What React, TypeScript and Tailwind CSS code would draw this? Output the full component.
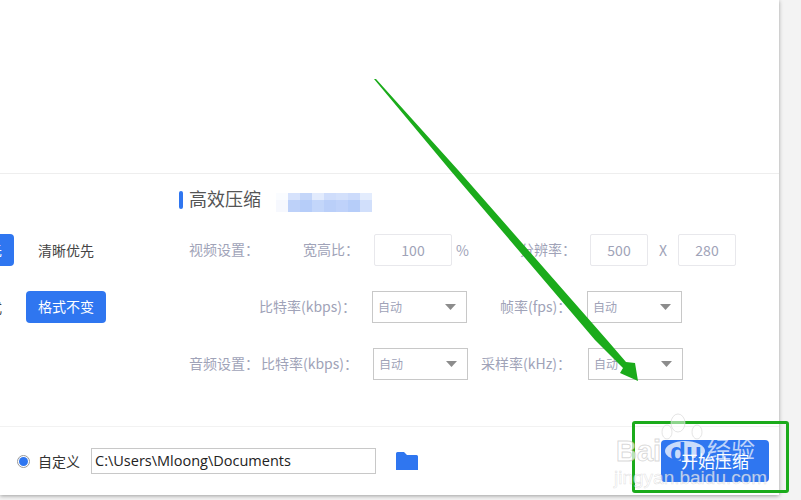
const cjk = "font-['Noto_Sans_CJK_SC','Noto_Sans',sans-serif]";
const colon = "\uFF1A";

function Label({ className, text }: { className: string; text: string }) {
  return <span className={`${className} shrink-0 text-[14px] leading-[31px] text-[#a0a3b8] whitespace-nowrap`}>{text + colon}</span>;
}

function NumberBox({ width, value }: { width: string; value: string }) {
  return (
    <div className={`${width} h-[32px] shrink-0 border border-[#e8e8ec] rounded-[2px] flex items-center justify-center text-[14px] text-[#a0a3b8]`}>
      {value}
    </div>
  );
}

function Select() {
  return (
    <div className="w-[95px] h-[32px] shrink-0 border border-[#c8c8c8] flex items-center justify-between pl-[5px] pr-[10px] text-[12px] text-[#a0a3b8]">
      <span>自动</span>
      <svg width="11" height="6" viewBox="0 0 11 6"><path d="M0 0H11L5.5 6Z" fill="#8c8c8c" /></svg>
    </div>
  );
}

function BlueButton({ text, margin }: { text: string; margin?: string }) {
  return (
    <div className={`${margin ?? ""} w-[80px] h-[32px] shrink-0 rounded-[4px] bg-[#2f76f0] text-white text-[14px] leading-[31px] text-center whitespace-nowrap`}>
      {text}
    </div>
  );
}

const blur = [
  "#fafcff", "#d6e2fc", "#c4d6f9", "#e2ebfd", "#cfddfb", "#d3e0fb", "#ccdbfb", "#e3ecfd",
  "#f6f8fe", "#bdd1f9", "#b6cdf9", "#c3d6fa", "#bacff9", "#bfd2fa", "#b6cdf9", "#d1dffb",
];

export default function App() {
  return (
    <div className={`relative w-[801px] h-[500px] overflow-hidden bg-[#f3f3f3] ${cjk}`}>
      {/* WINDOW */}
      <div className="w-[779px] h-[495px] bg-white flex flex-col shadow-[0_1px_4px_rgba(0,0,0,0.35)]">
        <div className="h-[174px] shrink-0 border-b border-[#eeeeee]" />

        {/* SETTINGS */}
        <div className="flex-1 flex flex-col overflow-hidden">
          <div className="mt-[17px] ml-[179px] h-[18px] flex items-center">
            <div className="w-[4px] h-[18px] rounded-[2px] bg-[#2f76f0]" />
            <span className="ml-[6px] text-[18px] leading-[15px] h-[18px] text-[#555555] whitespace-nowrap">高效压缩</span>
            <div className="ml-[15px] mt-[4px] w-[96px] h-[19px] grid grid-cols-8 grid-rows-[7px_12px] shrink-0">
              {blur.map((color, i) => (
                <div key={i} className="bg-[var(--c)]" style={{ "--c": color } as React.CSSProperties} />
              ))}
            </div>
          </div>

          <div className="mt-[25px] h-[32px] flex">
            <div className="w-[189px] shrink-0 flex items-center overflow-hidden">
              <BlueButton text="速度优先" margin="-ml-[66px]" />
              <div className="ml-[12px] w-[80px] shrink-0 text-center text-[14px] leading-[31px] text-[#444444]">清晰优先</div>
            </div>
            <Label className="w-[114px]" text="视频设置" />
            <Label className="w-[71px]" text="宽高比" />
            <NumberBox width="w-[78px]" value="100" />
            <span className="ml-[4px] w-[64px] shrink-0 text-[14px] leading-[32px] text-[#a0a3b8]">%</span>
            <Label className="w-[70px]" text="分辨率" />
            <NumberBox width="w-[58px]" value="500" />
            <span className="w-[30px] shrink-0 text-center text-[14px] leading-[32px] text-[#a0a3b8]">X</span>
            <NumberBox width="w-[58px]" value="280" />
          </div>

          <div className="mt-[25px] h-[32px] flex">
            <div className="w-[189px] shrink-0 flex items-center overflow-hidden">
              <div className="-ml-[66px] w-[68px] shrink-0 text-right text-[14px] leading-[31px] text-[#444444] whitespace-nowrap">默认格式</div>
              <BlueButton text="格式不变" margin="ml-[24px]" />
            </div>
            <Label className="ml-[70px] w-[113px]" text="比特率(kbps)" />
            <Select />
            <Label className="ml-[33px] w-[87px]" text="帧率(fps)" />
            <Select />
          </div>

          <div className="mt-[25px] h-[32px] flex">
            <div className="w-[189px] shrink-0" />
            <Label className="w-[72px]" text="音频设置" />
            <Label className="w-[112px]" text="比特率(kbps)" />
            <Select />
            <Label className="ml-[13px] w-[107px]" text="采样率(kHz)" />
            <Select />
          </div>
        </div>

        {/* FOOTER */}
        <div className="h-[69px] shrink-0 border-t border-[#f2f2f2] flex items-center pl-[19px]">
          <div className="w-[9px] h-[9px] rounded-full bg-[#2f76f0] outline-1 outline-offset-1 outline-[#9a9a9a]" />
          <span className="ml-[10px] w-[43px] text-[14px] text-[#333333] whitespace-nowrap">自定义</span>
          <div className="ml-[10px] w-[285px] h-[26px] border border-[#c8c8c8] pl-[3px] flex items-center text-[14.5px] text-[#222222] whitespace-nowrap font-['Open_Sans','Noto_Sans',sans-serif]">
            {"C:\\Users\\Mloong\\Documents"}
          </div>
          <svg className="ml-[20px]" width="22" height="18" viewBox="0 0 22 18">
            <path d="M0 1.5Q0 0 1.5 0H8L11 3H20.5Q22 3 22 4.5V18H0Z" fill="#2f76f0" />
          </svg>
          <div className="ml-[243px] w-[108px] h-[42px] rounded-[4px] bg-[#2f76f0]" />
        </div>
      </div>

      {/* ARROW */}
      <svg className="absolute inset-0" width="801" height="500" viewBox="0 0 801 500">
        <path d="M374 79L376 79L458 170L607 340L626 362L635 363L638 381L620 373L623 368L595 340L450 170Z" fill="#1bab1b" />
      </svg>

      {/* GREEN BOX */}
      <div className="absolute left-[632px] top-[421px] w-[157px] h-[72px] border-[3px] border-[#1bab1b] rounded-[3px]" />

      {/* WATERMARK */}
      <div className="absolute left-[610px] top-[410px] w-[191px] h-[90px] pointer-events-none font-['Liberation_Sans',sans-serif] text-white/70">
        <span className="absolute left-[6px] top-[24px] text-[29px] leading-[34px] font-bold [-webkit-text-stroke:1px_rgba(170,170,170,0.45)]">Bai</span>
        <svg className="absolute left-[50px] top-[0px]" width="60" height="54" viewBox="0 0 60 54">
          <g fill="#ffffff" fillOpacity="0.5" stroke="#d8d8d8" strokeOpacity="0.7" strokeWidth="1">
            <ellipse cx="18" cy="13" rx="7" ry="9" />
            <ellipse cx="7" cy="22" rx="5" ry="7" />
            <ellipse cx="37" cy="22" rx="5" ry="7" />
          </g>
          <ellipse cx="25" cy="41" rx="20" ry="10" fill="#ffffff" fillOpacity="0.75" />
        </svg>
        <span className="absolute left-[60px] top-[29px] text-[26px] leading-[26px] font-bold text-[#2f76f0]">du</span>
        <span className={`absolute left-[97px] top-[24px] text-[24px] leading-[28px] ${cjk}`}>经验</span>
        <span className="absolute left-[4px] top-[57px] text-[19px] leading-[22px] whitespace-nowrap [-webkit-text-stroke:0.5px_rgba(170,170,170,0.4)]">jingyan.baidu.com</span>
      </div>

      {/* BUTTON LABEL sits above the watermark */}
      <div className="absolute left-[661px] top-[440px] w-[108px] h-[42px] text-white text-[17px] leading-[42px] text-center">
        开始压缩
      </div>
    </div>
  );
}
